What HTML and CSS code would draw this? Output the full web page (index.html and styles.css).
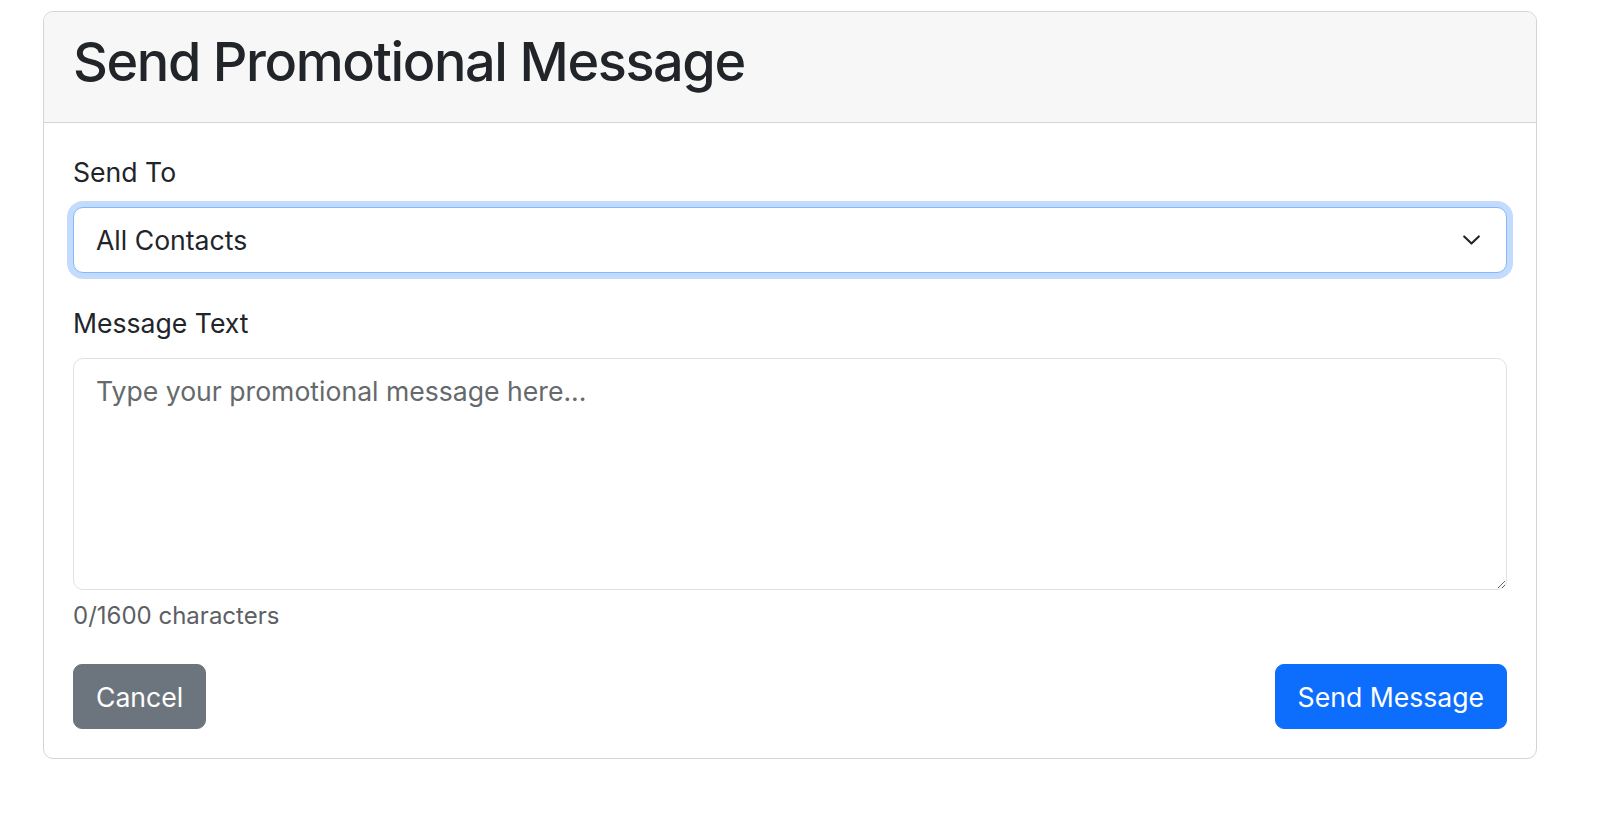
FILE: index.html
```html
<!DOCTYPE html>
<html lang="en">
<head>
<meta charset="utf-8">
<title>Send Promotional Message</title>
<link rel="stylesheet" href="styles.css">
</head>
<body>
<main class="page">
  <section class="card">
    <header class="card-header">
      <h2 class="card-title">Send Promotional Message</h2>
    </header>
    <form class="card-body">
      <div class="field field-send">
        <label class="form-label" for="sendTo">Send To</label>
        <div class="select-wrap">
          <select id="sendTo" class="form-select">
            <option>All Contacts</option>
          </select>
          <svg class="select-arrow" width="17" height="10" viewBox="0 0 17 10" aria-hidden="true">
            <polyline points="1.2,1.4 8.5,8.6 15.8,1.4" fill="none" stroke="#212529" stroke-width="2.1" stroke-linecap="round" stroke-linejoin="round"/>
          </svg>
        </div>
      </div>
      <div class="field field-message">
        <label class="form-label" for="msg">Message Text</label>
        <textarea id="msg" class="form-control" placeholder="Type your promotional message here..."></textarea>
        <div class="form-text">0/1600 characters</div>
      </div>
      <div class="actions">
        <button type="button" class="btn btn-secondary">Cancel</button>
        <button type="button" class="btn btn-primary">Send Message</button>
      </div>
    </form>
  </section>
</main>
</body>
</html>
```

FILE: styles.css
```css
* { box-sizing: border-box; }

html, body {
  margin: 0;
  padding: 0;
  background: #ffffff;
}

body {
  font-family: Inter, "Liberation Sans", Arial, sans-serif;
  color: #212529;
  font-size: 26.6px;
  line-height: 40px;
}

.page {
  padding: 11px 63px 0 43px;
}

.card {
  width: 1494px;
  border: 1px solid #d4d4d4;
  border-radius: 10px;
  background: #ffffff;
  overflow: hidden;
}

.card-header {
  background: #f7f7f7;
  border-bottom: 1px solid #d4d4d4;
  padding: 17px 29px 14px;
}

.card-title {
  margin: 0 0 14px;
  font-size: 54px;
  line-height: 65px;
  font-weight: 500;
  letter-spacing: -1.4px;
  color: #212529;
}

.card-body {
  display: flex;
  flex-direction: column;
  padding: 31px 29px 29px;
  margin: 0;
}

.field-send {
  margin-bottom: 32px;
}

.form-label {
  display: block;
  margin-bottom: 17px;
  font-size: 26.6px;
  line-height: 36px;
  color: #212529;
}

.select-wrap {
  position: relative;
}

.form-select {
  display: block;
  width: 100%;
  height: 66px;
  margin: 0;
  padding: 12px 60px 12px 22px;
  font-family: inherit;
  font-size: 26.6px;
  line-height: 40px;
  color: #212529;
  background: #ffffff;
  border: 1px solid #86b7fe;
  border-radius: 10px;
  box-shadow: 0 0 0 6px rgba(13, 110, 253, 0.25);
  appearance: none;
  -webkit-appearance: none;
  outline: none;
}

.select-arrow {
  position: absolute;
  right: 27px;
  top: 28px;
  pointer-events: none;
}

.form-control {
  display: block;
  width: 100%;
  height: 232px;
  margin: 0;
  padding: 12px 22px;
  font-family: inherit;
  font-size: 26.6px;
  line-height: 40px;
  color: #212529;
  background: #ffffff;
  border: 1px solid #dee2e6;
  border-radius: 10px;
  resize: vertical;
  outline: none;
}

.form-control::placeholder {
  color: #66696c;
  opacity: 1;
}

.form-text {
  margin-top: 8px;
  font-size: 24px;
  line-height: 36px;
  color: #5c6064;
}

.actions {
  display: flex;
  justify-content: space-between;
  align-items: center;
  margin-top: 30px;
}

.btn {
  height: 65px;
  padding: 11.5px 22px;
  font-family: inherit;
  font-size: 26.6px;
  line-height: 40px;
  font-weight: 400;
  color: #ffffff;
  border: 1px solid transparent;
  border-radius: 9px;
  cursor: pointer;
}

.btn-secondary {
  background: #6c757d;
  border-color: #6c757d;
}

.btn-primary {
  background: #0d6efd;
  border-color: #0d6efd;
}
```
